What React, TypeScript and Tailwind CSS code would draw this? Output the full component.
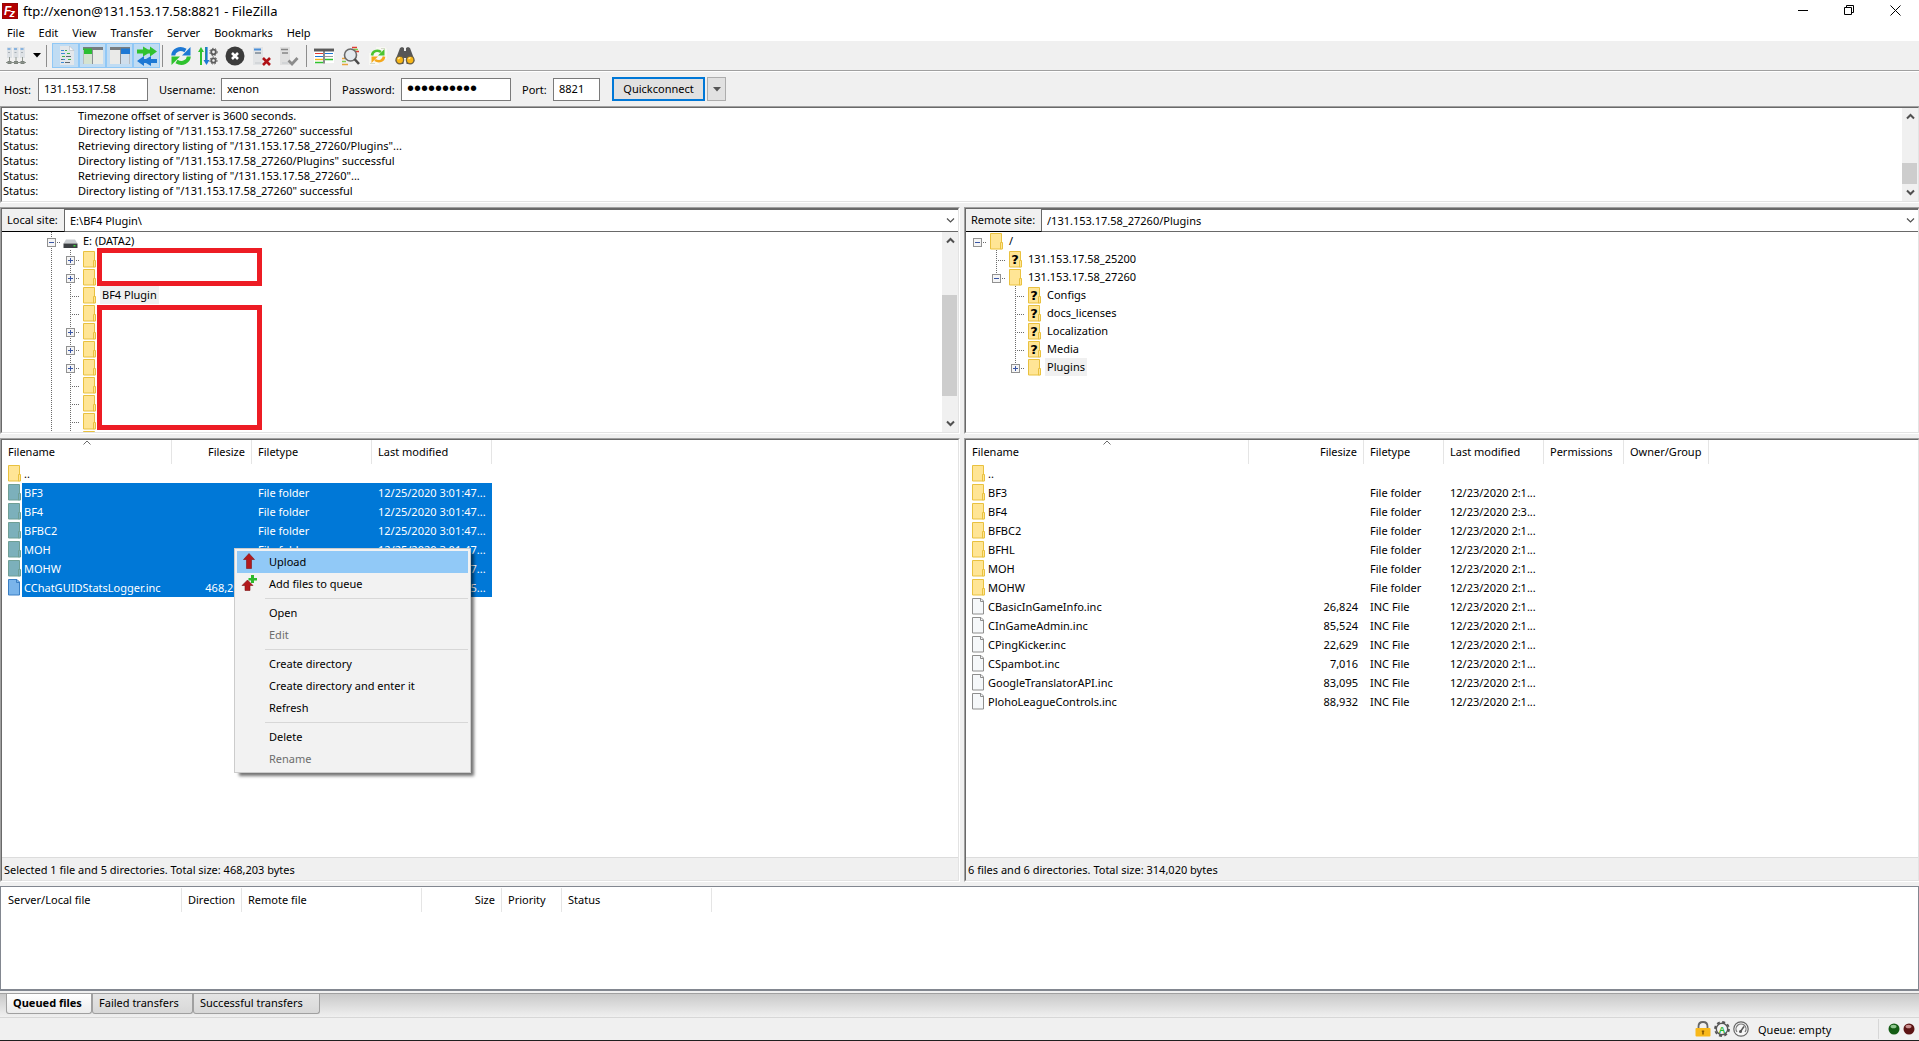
import { Fragment } from 'react'
import type { ReactNode } from 'react'
import clsx from 'clsx'

type FileRow = {
  name: string
  kind: 'folder' | 'file'
  size?: string
  type?: string
  modified?: string
  selected?: boolean
}

type TreeRow = {
  label?: string
  // one entry per 19px indent column
  lines: ('none' | 'bar' | 'tee' | 'plus' | 'plusEnd' | 'minus' | 'minusEnd' | 'minusRoot')[]
  icon: 'drive' | 'folder' | 'unknown'
  current?: boolean
}

const menus = ['File', 'Edit', 'View', 'Transfer', 'Server', 'Bookmarks', 'Help']

const logLines = [
  'Timezone offset of server is 3600 seconds.',
  'Directory listing of "/131.153.17.58_27260" successful',
  'Retrieving directory listing of "/131.153.17.58_27260/Plugins"...',
  'Directory listing of "/131.153.17.58_27260/Plugins" successful',
  'Retrieving directory listing of "/131.153.17.58_27260"...',
  'Directory listing of "/131.153.17.58_27260" successful',
]

const localTree: TreeRow[] = [
  { label: 'E: (DATA2)', lines: ['minus'], icon: 'drive' },
  { lines: ['bar', 'plus'], icon: 'folder' },
  { lines: ['bar', 'plus'], icon: 'folder' },
  { label: 'BF4 Plugin', lines: ['bar', 'tee'], icon: 'folder', current: true },
  { lines: ['bar', 'tee'], icon: 'folder' },
  { lines: ['bar', 'plus'], icon: 'folder' },
  { lines: ['bar', 'plus'], icon: 'folder' },
  { lines: ['bar', 'plus'], icon: 'folder' },
  { lines: ['bar', 'tee'], icon: 'folder' },
  { lines: ['bar', 'tee'], icon: 'folder' },
  { lines: ['bar', 'tee'], icon: 'folder' },
  { lines: ['bar', 'tee'], icon: 'folder' },
]

const remoteTree: TreeRow[] = [
  { label: '/', lines: ['minusRoot'], icon: 'folder' },
  { label: '131.153.17.58_25200', lines: ['none', 'tee'], icon: 'unknown' },
  { label: '131.153.17.58_27260', lines: ['none', 'minusEnd'], icon: 'folder' },
  { label: 'Configs', lines: ['none', 'none', 'tee'], icon: 'unknown' },
  { label: 'docs_licenses', lines: ['none', 'none', 'tee'], icon: 'unknown' },
  { label: 'Localization', lines: ['none', 'none', 'tee'], icon: 'unknown' },
  { label: 'Media', lines: ['none', 'none', 'tee'], icon: 'unknown' },
  { label: 'Plugins', lines: ['none', 'none', 'plusEnd'], icon: 'folder', current: true },
]

const localFiles: FileRow[] = [
  { name: '..', kind: 'folder' },
  { name: 'BF3', kind: 'folder', type: 'File folder', modified: '12/25/2020 3:01:47...', selected: true },
  { name: 'BF4', kind: 'folder', type: 'File folder', modified: '12/25/2020 3:01:47...', selected: true },
  { name: 'BFBC2', kind: 'folder', type: 'File folder', modified: '12/25/2020 3:01:47...', selected: true },
  { name: 'MOH', kind: 'folder', type: 'File folder', modified: '12/25/2020 3:01:47...', selected: true },
  { name: 'MOHW', kind: 'folder', type: 'File folder', modified: '12/25/2020 3:01:47...', selected: true },
  {
    name: 'CChatGUIDStatsLogger.inc',
    kind: 'file',
    size: '468,203',
    type: 'INC File',
    modified: '12/25/2020 3:01:45...',
    selected: true,
  },
]

const remoteFiles: FileRow[] = [
  { name: '..', kind: 'folder' },
  { name: 'BF3', kind: 'folder', type: 'File folder', modified: '12/23/2020 2:1...' },
  { name: 'BF4', kind: 'folder', type: 'File folder', modified: '12/23/2020 2:3...' },
  { name: 'BFBC2', kind: 'folder', type: 'File folder', modified: '12/23/2020 2:1...' },
  { name: 'BFHL', kind: 'folder', type: 'File folder', modified: '12/23/2020 2:1...' },
  { name: 'MOH', kind: 'folder', type: 'File folder', modified: '12/23/2020 2:1...' },
  { name: 'MOHW', kind: 'folder', type: 'File folder', modified: '12/23/2020 2:1...' },
  { name: 'CBasicInGameInfo.inc', kind: 'file', size: '26,824', type: 'INC File', modified: '12/23/2020 2:1...' },
  { name: 'CInGameAdmin.inc', kind: 'file', size: '85,524', type: 'INC File', modified: '12/23/2020 2:1...' },
  { name: 'CPingKicker.inc', kind: 'file', size: '22,629', type: 'INC File', modified: '12/23/2020 2:1...' },
  { name: 'CSpambot.inc', kind: 'file', size: '7,016', type: 'INC File', modified: '12/23/2020 2:1...' },
  { name: 'GoogleTranslatorAPI.inc', kind: 'file', size: '83,095', type: 'INC File', modified: '12/23/2020 2:1...' },
  { name: 'PlohoLeagueControls.inc', kind: 'file', size: '88,932', type: 'INC File', modified: '12/23/2020 2:1...' },
]

const contextMenu = [
  [
    { label: 'Upload', icon: 'upload', active: true },
    { label: 'Add files to queue', icon: 'queue' },
  ],
  [{ label: 'Open' }, { label: 'Edit', disabled: true }],
  [{ label: 'Create directory' }, { label: 'Create directory and enter it' }, { label: 'Refresh' }],
  [{ label: 'Delete' }, { label: 'Rename', disabled: true }],
] as { label: string; icon?: 'upload' | 'queue'; active?: boolean; disabled?: boolean }[][]

/* ---------- small drawings ---------- */

const AppIcon = () => (
  <svg width="16" height="16" viewBox="0 0 16 16" className="shrink-0" aria-hidden="true">
    <rect width="16" height="16" fill="#b30000" />
    <rect x="0.5" y="0.5" width="15" height="15" fill="none" stroke="#7c0d0d" strokeDasharray="1 1" />
    <text x="2" y="12" fontSize="12" fontWeight="700" fontStyle="italic" fontFamily="Liberation Sans, sans-serif" fill="#fff">
      F
    </text>
    <text x="7.500" y="14" fontSize="11" fontWeight="700" fontStyle="italic" fontFamily="Liberation Sans, sans-serif" fill="#fff">
      z
    </text>
  </svg>
)

const Folder = ({ selected, unknown }: { selected?: boolean; unknown?: boolean }) => {
  const edge = selected ? '#6f9f96' : '#e9c13f'
  return (
    <svg width="14" height="17" viewBox="0 0 14 17" className="shrink-0" aria-hidden="true">
      <path d="M.5 .5h11v15.500H.5z" fill={selected ? '#7cb0bb' : '#ffe595'} stroke={edge} />
      <path d="M10.500 9.500h2V16h-2z" fill={selected ? '#7cb0bb' : '#ffe595'} stroke={edge} />
      {unknown && (
        <text x="6" y="13" textAnchor="middle" fontSize="13" fontWeight="700" fontFamily="DejaVu Sans, sans-serif" fill="#000">
          ?
        </text>
      )}
    </svg>
  )
}

const Sheet = ({ selected }: { selected?: boolean }) => {
  const edge = selected ? '#3a7fc4' : '#8e8e8e'
  return (
    <svg width="14" height="17" viewBox="0 0 14 17" className="shrink-0" aria-hidden="true">
      <path d="M.5 .5H9l2.500 2.500v13H.5z" fill={selected ? '#7ab4ea' : '#f6f8fa'} stroke={edge} />
      <path d="M8.500 .5v3h3" fill="none" stroke={edge} />
    </svg>
  )
}

const Drive = () => (
  <svg width="15" height="17" viewBox="0 0 15 17" className="shrink-0" aria-hidden="true">
    <path d="M3 6.500h9l2.500 4H.5z" fill="#c9cdd0" />
    <path d="M.5 10.500h14v4.500H.5z" fill="#3c4043" />
    <path d="M10.500 12h2v1.500h-2z" fill="#3ddc3d" />
  </svg>
)

const TreeLine = ({ kind }: { kind: TreeRow['lines'][number] }) => {
  const boxed = kind.startsWith('plus') || kind.startsWith('minus')
  const below = kind === 'bar' || kind === 'tee' || kind === 'plus' || kind === 'minus'
  return (
    <svg width="19" height="18" viewBox="0 0 19 18" className="shrink-0" aria-hidden="true">
      <g stroke="#6b6b6b" strokeDasharray="1 1">
        {kind !== 'none' && kind !== 'minusRoot' && <path d="M9.500 0v10" />}
        {below && <path d="M9.500 10v8" />}
        {kind !== 'none' && kind !== 'bar' && <path d="M9 10.500h11" />}
      </g>
      {boxed && (
        <>
          <rect x="5.500" y="6.500" width="8" height="8" fill="#f5f5f5" stroke="#919191" />
          <path d="M7 10.500h5" stroke="#3a56a5" />
          {kind.startsWith('plus') && <path d="M9.500 8v5" stroke="#3a56a5" />}
        </>
      )}
    </svg>
  )
}

const Chevron = ({ up, thin }: { up?: boolean; thin?: boolean }) => (
  <svg width="9" height="7" viewBox="0 0 9 7" className={clsx('shrink-0', up && 'rotate-180')} aria-hidden="true">
    <path d="M1 1.500l3.500 3.500L8 1.500" fill="none" stroke="#505050" strokeWidth={thin ? 1.2 : 2} />
  </svg>
)

const Caret = ({ className }: { className?: string }) => (
  <svg width="8" height="5" viewBox="0 0 8 5" className={className} aria-hidden="true">
    <path d="M0 0h8L4 4.500z" fill="currentColor" />
  </svg>
)

const UploadIcon = () => (
  <svg width="16" height="16" viewBox="0 0 16 16" aria-hidden="true">
    <path d="M8 .5 13.500 6.500H10.500v9h-5v-9h-3z" fill="#b3191d" stroke="#7d1416" strokeWidth=".6" />
  </svg>
)

const QueueIcon = () => (
  <svg width="16" height="16" viewBox="0 0 16 16" aria-hidden="true">
    <path d="M6.500 5 12 10.500H9v5H4v-5H1z" fill="#b3191d" stroke="#7d1416" strokeWidth=".6" />
    <path d="M10 0h3v3h3v2.500h-3V8h-3V5.500H7.500V3H10z" fill="#2db92d" />
  </svg>
)

const Svg = ({ children }: { children: ReactNode }) => (
  <svg width="20" height="20" viewBox="0 0 20 20" aria-hidden="true">
    {children}
  </svg>
)

const SiteManagerIcon = () => (
  <Svg>
    {[1, 7.5, 14].map((x) => (
      <g key={x}>
        <path d={`M${x} 1h5v11h-5z`} fill="#dde1e5" />
        <path d={`M${x + 0.5} 3h3`} stroke="#6ba3dd" strokeWidth="1.500" />
        <path d={`M${x + 1} 6.500h2`} stroke="#a9b0b6" />
        <path d={`M${x + 2.5} 11v5`} stroke="#8f968f" />
        <path d={`M${x + 0.5} 15h4v3h-4z`} fill="#7b827b" />
      </g>
    ))}
    <path d="M0 16.500h20" stroke="#8a918a" />
  </Svg>
)

const LogIcon = () => (
  <Svg>
    <path d="M4 0h9.500L18 4.500V19H4z" fill="#e3e7eb" />
    <path d="M13.500 0v4.500H18z" fill="#fafafa" stroke="#b3bbc2" strokeWidth=".6" />
    <path d="M5 4.500h3M5 7.500h4M7 13.500h2M5 16.500h3" stroke="#3d8bd6" />
    <path d="M6 10.500h3M11 7.500h3M12 13.500h3M9 4.500h2" stroke="#3fb54a" />
    <path d="M10 10.500h5M5 13.500h2M9 16.500h5" stroke="#5d6870" />
  </Svg>
)

const LocalTreeIcon = () => (
  <Svg>
    <rect x="0" y="1" width="20" height="17" fill="#e9ebe6" />
    <path d="M0 1h20v3H0z" fill="#777c80" />
    <path d="M0 2.500h9V8H0z" fill="#2bbf33" />
    <path d="M0 8h9v10H0z" fill="#d5e3d0" />
    <path d="M9.500 4v14" stroke="#8b9096" />
    <path d="M.5 4v14" stroke="#b8bcc0" />
  </Svg>
)

const RemoteTreeIcon = () => (
  <Svg>
    <rect x="0" y="1" width="20" height="17" fill="#eaeae8" />
    <path d="M0 1h20v3H0z" fill="#777c80" />
    <path d="M11 2.500h9V8h-9z" fill="#1d78d4" />
    <path d="M11 8h9v10h-9z" fill="#cfdeec" />
    <path d="M10.500 4v14" stroke="#8b9096" />
    <path d="M19.500 8v10" stroke="#b8bcc0" />
  </Svg>
)

const QueueToggleIcon = () => (
  <Svg>
    <path d="M0 3.500h6V.5l5 3h2V.5l7 5-7 5v-3h-2l-5 3v-3H0z" fill="#2fc22f" />
    <path d="M20 13h-6v-3l-5 3H7v-3l-7 5 7 5v-3h2l5 3v-3h6z" fill="#1d78d4" />
  </Svg>
)

const RefreshIcon = () => (
  <Svg>
    <path d="M2.200 9.500C2.500 4.500 8.500 1 14.500 4.500" fill="none" stroke="#1d78d4" strokeWidth="4" />
    <path d="M19.500 1v8.500H11z" fill="#1d78d4" />
    <path d="M17.800 10.500c-.3 5-6.300 8.500-12.300 5" fill="none" stroke="#2fc22f" strokeWidth="4" />
    <path d="M.5 19v-8.500H9z" fill="#2fc22f" />
  </Svg>
)

const ProcessQueueIcon = () => (
  <Svg>
    <path d="M3 19V4M8 1v14" stroke="#2fc22f" strokeWidth="2" />
    <path d="M0 6 3 1l3 5z" fill="#2fc22f" />
    <path d="M8.500 1v14" stroke="#1d78d4" strokeWidth="2.200" />
    <path d="M5.500 14h6l-3 5z" fill="#1d78d4" />
    <circle cx="15.500" cy="6" r="2.300" fill="none" stroke="#5c5c5c" strokeWidth="1.800" />
    <circle cx="15.500" cy="6" r="3.700" fill="none" stroke="#5c5c5c" strokeDasharray="1.500 1.600" />
    <circle cx="15.500" cy="14.500" r="2.200" fill="none" stroke="#5c5c5c" strokeWidth="1.800" />
    <circle cx="15.500" cy="14.500" r="3.600" fill="none" stroke="#5c5c5c" strokeDasharray="1.500 1.600" />
  </Svg>
)

const CancelIcon = () => (
  <Svg>
    <circle cx="10" cy="10" r="9.500" fill="#3b3b3b" />
    <path d="M7 7l6 6M13 7l-6 6" stroke="#fff" strokeWidth="2.600" />
  </Svg>
)

const DisconnectIcon = () => (
  <Svg>
    <path d="M1 1h10v18H1z" fill="#e2e4e6" />
    <path d="M2 3.500h7" stroke="#4a8fd8" strokeWidth="2" />
    <path d="M3 7h6" stroke="#7b8894" strokeWidth="1.500" />
    <path d="M3 17h6" stroke="#c4c8cc" />
    <path d="M11 12l7 7M18 12l-7 7" stroke="#b01116" strokeWidth="2.600" />
  </Svg>
)

const ReconnectIcon = () => (
  <Svg>
    <path d="M1 1h10v18H1z" fill="#e0e0e0" />
    <path d="M2 3.500h7M3 7h6" stroke="#858585" strokeWidth="1.500" />
    <path d="M3 17h6" stroke="#c4c8cc" />
    <path d="M9.500 14.500l3.500 3.500 5.500-6" fill="none" stroke="#8c8c8c" strokeWidth="2.800" />
  </Svg>
)

const FilterIcon = () => (
  <Svg>
    <rect x="0" y="2" width="20" height="15" fill="#fff" />
    <path d="M0 4h20" stroke="#5b5b5b" strokeWidth="3" />
    <path d="M1 7.500h8" stroke="#e03c31" />
    <path d="M11 7.500h8M1 10.500h8" stroke="#1d78d4" />
    <path d="M1 13.500h8" stroke="#f2b51d" strokeWidth="1.400" />
    <path d="M11 10.500h8" stroke="#9a9a9a" />
    <path d="M11 13.500h8M1 16.500h8" stroke="#2fc22f" strokeWidth="1.400" />
    <path d="M10 3v14.500" stroke="#5b5b5b" strokeWidth="1.400" />
  </Svg>
)

const SearchIcon = () => (
  <Svg>
    <path d="M11 1.500h5M14 5.500h4" stroke="#e03c31" strokeWidth="1.400" />
    <path d="M1 12.500h3M1 18.500h6" stroke="#e9a23b" strokeWidth="1.400" />
    <path d="M1 15.500h4M13 3.500h4" stroke="#7fce4f" strokeWidth="1.400" />
    <circle cx="9.500" cy="9" r="6" fill="#e3e9ee" stroke="#6a6a6a" strokeWidth="1.600" />
    <path d="M13.500 13l4.500 5" stroke="#4a4a4a" strokeWidth="2.600" />
  </Svg>
)

const CompareIcon = () => (
  <Svg>
    <path d="M8 1h9l2 2v10H8z" fill="#f8f8f4" />
    <path d="M1 7h10v12H1z" fill="#f8f8f4" />
    <path d="M13 2.500h4M2 17.500h5" stroke="#d6dbc9" />
    <path d="M4 9.500c.5-4.500 5-6 9-3.500" fill="none" stroke="#4cc42f" strokeWidth="2.600" />
    <path d="M16.500 3v6.500H10z" fill="#4cc42f" />
    <path d="M16 10.500c-.5 4.500-5 6-9 3.500" fill="none" stroke="#f4a81c" strokeWidth="2.600" />
    <path d="M3.500 17v-6.500H10z" fill="#f4a81c" />
  </Svg>
)

const BinocularsIcon = () => (
  <Svg>
    <path d="M5 2l2-1 2 1v3h2V2l2-1 2 1 3 8 1.500 5-4 3h-4V12h-3v6h-4l-4-3L2 10z" fill="#565656" />
    <circle cx="4.800" cy="14" r="3.800" fill="#f8b616" stroke="#6b6045" strokeWidth="1.300" />
    <circle cx="15.200" cy="14" r="3.800" fill="#f8b616" stroke="#6b6045" strokeWidth="1.300" />
    <path d="M3 13l2-1.500M13.500 13l2-1.500" stroke="#ffe9a8" strokeWidth="1.200" />
  </Svg>
)

/* ---------- shared pieces ---------- */

const ToolButton = ({ label, active, children }: { label: string; active?: boolean; children: ReactNode }) => (
  <button
    type="button"
    aria-label={label}
    aria-pressed={active}
    className={clsx(
      'flex h-[25px] w-[27px] items-center justify-center border',
      active ? 'border-[#90c8f6] bg-[#c0dcf3]' : 'border-transparent',
    )}
  >
    {children}
  </button>
)

const ToolSeparator = () => <div className="mx-[2px] h-[22px] w-px bg-[#8d8d8d]" />

// space above, thumb and space below are given as flex-grow weights
const Scrollbar = ({ above, thumb, below }: { above: number; thumb: number; below: number }) => (
  <div className="flex w-4 shrink-0 flex-col items-center bg-[#f0f0f0]">
    <div className="flex h-[17px] items-center">
      <Chevron up />
    </div>
    <div style={{ flexGrow: above }} />
    <div className="w-full pr-px" style={{ flexGrow: thumb }}>
      <div className="h-full bg-[#cdcdcd]" />
    </div>
    <div style={{ flexGrow: below }} />
    <div className="flex h-[17px] items-center">
      <Chevron />
    </div>
  </div>
)

// sunken 3D border used around every pane
const Sunken = ({ className, children }: { className?: string; children: ReactNode }) => (
  <div className={clsx('flex border-t border-b border-l border-t-[#a0a0a0] border-b-white border-l-[#a0a0a0]', className)}>
    <div className="flex min-w-0 flex-1 flex-col border border-t-[#696969] border-r-[#e3e3e3] border-b-[#e3e3e3] border-l-[#696969] bg-white">
      {children}
    </div>
  </div>
)

const SiteBar = ({ id, label, path, labelWidth }: { id: string; label: string; path: string; labelWidth: string }) => (
  <div className="flex h-[23px] shrink-0">
    <label
      htmlFor={id}
      className={clsx('flex items-center border-r border-b border-r-[#696969] border-b-black bg-[#f0f0f0] pb-px pl-[5px]', labelWidth)}
    >
      {label}
    </label>
    <div className="relative min-w-0 flex-1 border-t border-b border-[#696969]">
      <select id={id} defaultValue={path} className="h-full w-full appearance-none bg-white px-[5px] pb-px outline-none">
        <option>{path}</option>
      </select>
      <span className="pointer-events-none absolute inset-y-0 right-[3px] flex items-center">
        <Chevron thin />
      </span>
    </div>
  </div>
)

const Tree = ({ rows }: { rows: TreeRow[] }) => (
  <ul>
    {rows.map((row, i) => (
      <li key={i} className="flex h-[18px] items-center">
        {row.lines.map((kind, j) => (
          <TreeLine key={j} kind={kind} />
        ))}
        <span className={clsx('flex w-5 shrink-0', row.icon === 'drive' ? 'pl-[2px]' : 'pl-[3px]')}>
          {row.icon === 'drive' ? <Drive /> : <Folder unknown={row.icon === 'unknown'} />}
        </span>
        {row.label && (
          <span className={clsx('px-[2px] leading-[18px]', row.current && 'bg-[#f0f0f0]')}>{row.label}</span>
        )}
      </li>
    ))}
  </ul>
)

const HeadCell = ({ children, right, sorted }: { children: string; right?: boolean; sorted?: boolean }) => (
  <th
    scope="col"
    className={clsx(
      'relative h-6 border-r border-[#e5e5e5] px-[6px] pt-0 pb-[2px] font-normal whitespace-nowrap',
      right ? 'text-right' : 'text-left',
    )}
  >
    {sorted && (
      <svg width="8" height="5" viewBox="0 0 8 5" className="absolute top-0 left-1/2 -translate-x-1/2" aria-hidden="true">
        <path d="M.5 4.500 4 1l3.500 3.500" fill="none" stroke="#6b6b6b" />
      </svg>
    )}
    {children}
  </th>
)

const FileTable = ({ rows, remote }: { rows: FileRow[]; remote?: boolean }) => (
  <table className={clsx('table-fixed border-separate border-spacing-0', remote ? 'w-[743px]' : 'w-[490px]')}>
    <colgroup>
      <col className={remote ? 'w-[283px]' : 'w-[170px]'} />
      <col className={remote ? 'w-[115px]' : 'w-[80px]'} />
      <col className={remote ? 'w-[80px]' : 'w-[120px]'} />
      <col className={remote ? 'w-[100px]' : 'w-[120px]'} />
      {remote && <col className="w-[80px]" />}
      {remote && <col className="w-[85px]" />}
    </colgroup>
    <thead>
      <tr>
        <HeadCell sorted>Filename</HeadCell>
        <HeadCell right>Filesize</HeadCell>
        <HeadCell>Filetype</HeadCell>
        <HeadCell>Last modified</HeadCell>
        {remote && <HeadCell>Permissions</HeadCell>}
        {remote && <HeadCell>Owner/Group</HeadCell>}
      </tr>
    </thead>
    <tbody>
      {rows.map((row) => {
        const cell = clsx('h-[19px] p-0 px-[6px] whitespace-nowrap', row.selected && 'bg-[#0078d7] text-white')
        return (
          <tr key={row.name}>
            <td className="h-[19px] p-0 pl-[6px]">
              <div className="flex h-[19px] items-center">
                {row.kind === 'folder' ? <Folder selected={row.selected} /> : <Sheet selected={row.selected} />}
                <span
                  className={clsx(
                    'flex h-[19px] flex-1 items-center px-[2px] whitespace-nowrap',
                    row.selected && 'bg-[#0078d7] text-white',
                  )}
                >
                  {row.name}
                </span>
              </div>
            </td>
            <td className={clsx(cell, 'text-right')}>{row.size}</td>
            <td className={cell}>{row.type}</td>
            <td className={cell}>{row.modified}</td>
            {remote && <td className={cell} />}
            {remote && <td className={cell} />}
          </tr>
        )
      })}
    </tbody>
  </table>
)

const ContextMenu = () => (
  <div
    role="menu"
    className="absolute top-[108px] left-[232px] w-[237px] border border-[#cccccc] bg-[#f2f2f2] p-[2px] shadow-[4px_4px_3px_-1px_rgba(0,0,0,0.55)]"
  >
    {contextMenu.map((group, i) => (
      <Fragment key={i}>
        {i > 0 && (
          <div className="flex h-[7px] items-center pl-7">
            <div className="h-px w-full bg-[#d7d7d7]" />
          </div>
        )}
        {group.map((item) => (
          <button
            key={item.label}
            type="button"
            role="menuitem"
            disabled={item.disabled}
            className={clsx(
              'flex h-[22px] w-full items-center pb-[2px] pl-1 text-left',
              item.active && 'bg-[#91c9f7]',
              item.disabled && 'text-[#6d6d6d]',
            )}
          >
            <span className="w-7 shrink-0">
              {item.icon === 'upload' && <UploadIcon />}
              {item.icon === 'queue' && <QueueIcon />}
            </span>
            {item.label}
          </button>
        ))}
      </Fragment>
    ))}
  </div>
)

const field = 'h-[23px] border border-[#7a7a7a] bg-white px-[5px] pb-px outline-none'
const tab = 'h-5 rounded-b-[3px] border border-t-0 border-[#a0a0a0] bg-linear-to-b pb-[2px] pl-[6px] text-left'

export default function App() {
  return (
    <div className="flex h-screen min-w-[1200px] flex-col overflow-hidden bg-[#f0f0f0] font-['Noto_Sans','Open_Sans',sans-serif] text-[11px] leading-[15px] text-black">
      <header className="bg-white">
        <div className="flex h-6 items-start justify-between">
          <div className="flex h-[22px] items-center gap-[5px] pl-[2px]">
            <AppIcon />
            <h1 className="text-[13px] leading-4">ftp://xenon@131.153.17.58:8821 - FileZilla</h1>
          </div>
          <div className="flex h-5 pr-px">
            <button type="button" aria-label="Minimize" className="flex w-[46px] items-center justify-center">
              <svg width="11" height="11" viewBox="0 0 11 11">
                <path d="M0 5.500h10" stroke="#000" />
              </svg>
            </button>
            <button type="button" aria-label="Restore" className="flex w-[46px] items-center justify-center">
              <svg width="11" height="11" viewBox="0 0 11 11">
                <path d="M.5 2.500h7v7h-7zM2.500 2.500v-2h7v7h-2" fill="none" stroke="#000" />
              </svg>
            </button>
            <button type="button" aria-label="Close" className="flex w-[46px] items-center justify-center">
              <svg width="11" height="11" viewBox="0 0 11 11">
                <path d="M.5.5l10 10M10.500.5l-10 10" stroke="#000" />
              </svg>
            </button>
          </div>
        </div>
        <nav className="flex h-[17px] items-center">
          {menus.map((m) => (
            <button key={m} type="button" className="px-[7px]">
              {m}
            </button>
          ))}
        </nav>
      </header>

      <div className="flex h-[30px] shrink-0 items-center border-b border-[#a0a0a0] pl-[2px]">
        <ToolButton label="Site Manager">
          <SiteManagerIcon />
        </ToolButton>
        <button type="button" aria-label="Open site list" className="flex h-[25px] w-[15px] items-center justify-center">
          <Caret />
        </button>
        <ToolSeparator />
        <div className="flex pl-[3px]">
          <ToolButton label="Toggle message log" active>
            <LogIcon />
          </ToolButton>
          <ToolButton label="Toggle local tree" active>
            <LocalTreeIcon />
          </ToolButton>
          <ToolButton label="Toggle remote tree" active>
            <RemoteTreeIcon />
          </ToolButton>
          <ToolButton label="Toggle transfer queue" active>
            <QueueToggleIcon />
          </ToolButton>
        </div>
        <ToolSeparator />
        <div className="flex px-[2px]">
          <ToolButton label="Refresh">
            <RefreshIcon />
          </ToolButton>
          <ToolButton label="Process queue">
            <ProcessQueueIcon />
          </ToolButton>
          <ToolButton label="Cancel">
            <CancelIcon />
          </ToolButton>
          <ToolButton label="Disconnect">
            <DisconnectIcon />
          </ToolButton>
          <ToolButton label="Reconnect">
            <ReconnectIcon />
          </ToolButton>
        </div>
        <ToolSeparator />
        <div className="flex px-px">
          <ToolButton label="Filters">
            <FilterIcon />
          </ToolButton>
          <ToolButton label="Directory comparison">
            <SearchIcon />
          </ToolButton>
          <ToolButton label="Synchronized browsing">
            <CompareIcon />
          </ToolButton>
          <ToolButton label="Find files">
            <BinocularsIcon />
          </ToolButton>
        </div>
      </div>

      <form className="flex h-[35px] shrink-0 items-center border-t border-white pl-1" onSubmit={(e) => e.preventDefault()}>
        <label htmlFor="host" className="w-[34px]">
          Host:
        </label>
        <input id="host" type="text" defaultValue="131.153.17.58" className={clsx(field, 'w-[110px]')} />
        <label htmlFor="username" className="ml-[11px] w-[62px]">
          Username:
        </label>
        <input id="username" type="text" defaultValue="xenon" className={clsx(field, 'w-[110px]')} />
        <label htmlFor="password" className="ml-[11px] w-[59px]">
          Password:
        </label>
        <input
          id="password"
          type="password"
          defaultValue="xxxxxxxxxx"
          className={clsx(field, "w-[110px] font-['Liberation_Sans',sans-serif] text-xl leading-5")}
        />
        <label htmlFor="port" className="ml-[11px] w-[31px]">
          Port:
        </label>
        <input id="port" type="text" defaultValue="8821" className={clsx(field, 'w-[47px]')} />
        <button type="submit" className="ml-3 h-6 w-[93px] border-2 border-[#0078d7] bg-[#e1e1e1] pb-px leading-[19px]">
          Quickconnect
        </button>
        <button
          type="button"
          aria-label="Quickconnect history"
          className="ml-[2px] flex h-6 w-[19px] items-center justify-center border border-[#adadad] bg-[#e1e1e1]"
        >
          <Caret className="text-[#555555]" />
        </button>
      </form>

      <Sunken className="h-[97px] shrink-0">
        <div className="flex min-h-0 flex-1">
          <div className="flex-1">
            {logLines.map((line, i) => (
              <p key={i} className="flex pl-px">
                <span className="w-[75px]">Status:</span>
                <span>{line}</span>
              </p>
            ))}
          </div>
          <Scrollbar above={38} thumb={21} below={0} />
        </div>
      </Sunken>

      <main className="grid min-h-0 flex-1 grid-cols-[960fr_955fr] gap-x-1 pt-1">
        <section className="flex min-h-0 flex-col gap-1">
          <Sunken className="h-[227px] shrink-0 border-r border-r-white">
            <SiteBar id="local-site" label="Local site:" path="E:\BF4 Plugin\" labelWidth="w-[63px]" />
            <div className="relative flex min-h-0 flex-1 overflow-hidden">
              <div className="flex-1 pl-10">
                <Tree rows={localTree} />
              </div>
              <div className="absolute top-4 left-[95px] h-[38px] w-[165px] border-[5px] border-[#ed1c24] bg-white" />
              <div className="absolute top-[73px] left-[95px] h-[125px] w-[165px] border-[5px] border-[#ed1c24] bg-white" />
              <Scrollbar above={46} thumb={101} below={19} />
            </div>
          </Sunken>
          <Sunken className="min-h-0 flex-1 border-r border-r-white">
            <div className="relative flex-1">
              <FileTable rows={localFiles} />
              <ContextMenu />
            </div>
            <p className="flex h-[23px] items-center border-t border-[#dcdcdc] bg-[#f0f0f0] pl-[2px]">
              Selected 1 file and 5 directories. Total size: 468,203 bytes
            </p>
          </Sunken>
        </section>

        <section className="flex min-h-0 flex-col gap-1">
          <Sunken className="h-[227px] shrink-0">
            <SiteBar id="remote-site" label="Remote site:" path="/131.153.17.58_27260/Plugins" labelWidth="w-[76px]" />
            <div className="min-h-0 flex-1 pl-[2px]">
              <Tree rows={remoteTree} />
            </div>
          </Sunken>
          <Sunken className="min-h-0 flex-1">
            <div className="flex-1">
              <FileTable rows={remoteFiles} remote />
            </div>
            <p className="flex h-[23px] items-center border-t border-[#dcdcdc] bg-[#f0f0f0] pl-[2px]">
              6 files and 6 directories. Total size: 314,020 bytes
            </p>
          </Sunken>
        </section>
      </main>

      <div className="mt-1 h-[105px] shrink-0 border border-b-2 border-[#828790] bg-white pt-px pl-px">
        <table className="w-[710px] table-fixed border-separate border-spacing-0">
          <colgroup>
            <col className="w-[180px]" />
            <col className="w-[60px]" />
            <col className="w-[180px]" />
            <col className="w-[80px]" />
            <col className="w-[60px]" />
            <col className="w-[150px]" />
          </colgroup>
          <thead>
            <tr>
              <HeadCell>Server/Local file</HeadCell>
              <HeadCell>Direction</HeadCell>
              <HeadCell>Remote file</HeadCell>
              <HeadCell right>Size</HeadCell>
              <HeadCell>Priority</HeadCell>
              <HeadCell>Status</HeadCell>
            </tr>
          </thead>
        </table>
      </div>

      <div
        role="tablist"
        className="mt-[2px] flex h-6 shrink-0 items-start border-t border-[#a0a0a0] bg-linear-to-b from-[#c9c9c9] to-[#f0f0f0] pl-[6px]"
      >
        <button
          type="button"
          role="tab"
          aria-selected="true"
          className={clsx(tab, 'w-[86px] from-white to-[#ececec] font-bold')}
        >
          Queued files
        </button>
        <button type="button" role="tab" aria-selected="false" className={clsx(tab, 'w-[101px] from-[#e4e4e4] to-[#d8d8d8]')}>
          Failed transfers
        </button>
        <button type="button" role="tab" aria-selected="false" className={clsx(tab, 'w-[127px] from-[#e4e4e4] to-[#d8d8d8]')}>
          Successful transfers
        </button>
      </div>

      <footer className="flex h-6 shrink-0 items-center justify-end border-t border-b border-t-[#d7d7d7] border-b-[#1f1f1f] pr-1">
        <div className="flex items-center gap-[3px]">
          <svg width="16" height="16" viewBox="0 0 16 16" aria-hidden="true">
            <path d="M3.500 8V5.500C3.500 2.800 5.300 1 8 1s4.500 1.800 4.500 4.500V8" fill="none" stroke="#666" strokeWidth="1.800" />
            <rect x=".5" y="7" width="15" height="8.500" rx="1" fill="#f8b81a" />
            <path d="M8 9.500v4M6.800 10.300h2.400" stroke="#8a5a00" strokeWidth="1.600" />
          </svg>
          <svg width="16" height="16" viewBox="0 0 16 16" aria-hidden="true">
            <circle cx="8" cy="8" r="7" fill="none" stroke="#555" strokeWidth="1.800" strokeDasharray="3 2.500" />
            <circle cx="8" cy="8" r="5.700" fill="#f3f3f3" stroke="#555" strokeWidth="1.400" />
            <text x="8" y="11.500" textAnchor="middle" fontSize="9" fontWeight="700" fontFamily="Liberation Sans, sans-serif" fill="#22b82c">
              A
            </text>
          </svg>
          <svg width="16" height="16" viewBox="0 0 16 16" aria-hidden="true">
            <circle cx="8" cy="8" r="7.200" fill="#f6f6f6" stroke="#666" strokeWidth="1.200" />
            <path d="M4 11a5 5 0 1 1 8 0" fill="none" stroke="#777" strokeWidth="1.200" />
            <path d="M7.500 10.500 11 5.500" stroke="#555" strokeWidth="1.500" />
            <circle cx="7.500" cy="10.500" r="1.500" fill="#555" />
          </svg>
        </div>
        <span className="w-[129px] pl-[9px]">Queue: empty</span>
        <div className="mr-[9px] h-5 w-px bg-[#d7d7d7]" />
        <div className="flex gap-[3px]">
          <svg width="12" height="12" viewBox="0 0 12 12" aria-hidden="true">
            <circle cx="6" cy="6" r="5.500" fill="#145c14" />
            <ellipse cx="5.500" cy="3.500" rx="3" ry="1.800" fill="#8fc78f" />
          </svg>
          <svg width="12" height="12" viewBox="0 0 12 12" aria-hidden="true">
            <circle cx="6" cy="6" r="5.500" fill="#5c1414" />
            <ellipse cx="5.500" cy="3.500" rx="3" ry="1.800" fill="#c98f8f" />
          </svg>
        </div>
      </footer>
    </div>
  )
}
